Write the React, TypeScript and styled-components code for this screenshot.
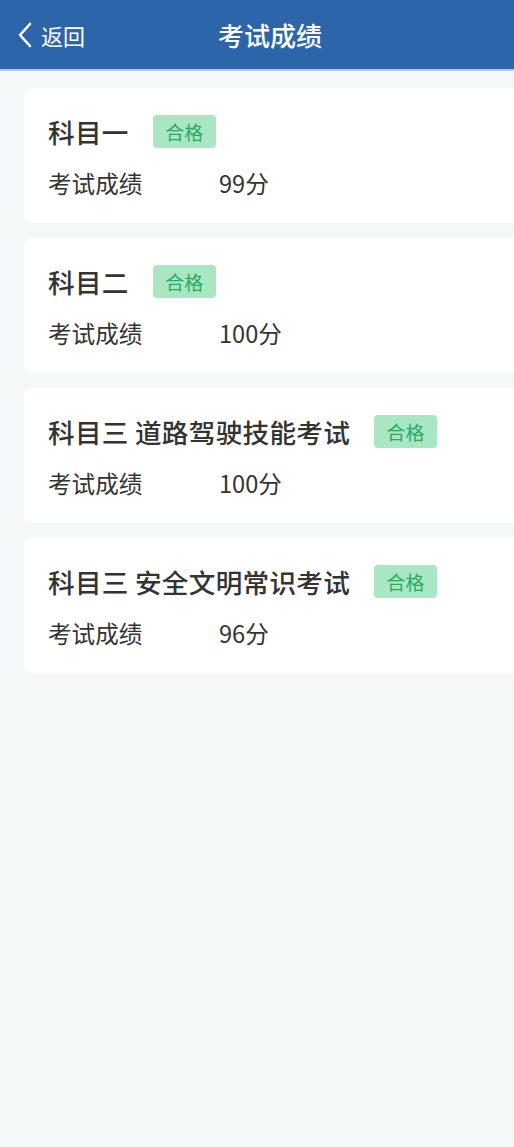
import styled, { createGlobalStyle } from "styled-components"

const GlobalStyle = createGlobalStyle`
  html, body {
    margin: 0;
    padding: 0;
    background: #f4f8f9;
  }
  body {
    font-family: "Noto Sans CJK SC", "Noto Sans", sans-serif;
    color: #333;
  }
`

const Page = styled.div`
  min-height: 1147px;
  background: #f4f8f9;
  overflow: hidden;
`

const Header = styled.div`
  height: 71px;
  background: #2d65aa;
  border-bottom: 2px solid #a9cbe8;
  box-sizing: border-box;
  display: grid;
  grid-template-columns: 110px 1fr 110px;
  align-items: center;
`

const Back = styled.div`
  display: flex;
  align-items: center;
  gap: 8px;
  padding-left: 17px;
  color: #fff;
  font-size: 22px;
`

const Title = styled.div`
  text-align: center;
  color: #fff;
  font-size: 26px;
  font-weight: 500;
  padding-left: 26px;
`

const List = styled.div`
  display: flex;
  flex-direction: column;
  gap: 15px;
  padding: 17px 0 0 24px;
`

const Card = styled.div`
  background: #fff;
  border-radius: 7px 0 0 7px;
  height: 135px;
  box-sizing: border-box;
  padding: 24px 24px 0;
  display: flex;
  flex-direction: column;
  gap: 17px;
`

const TitleRow = styled.div`
  display: flex;
  align-items: center;
  gap: 24px;
  height: 38px;
`

const Subject = styled.div`
  font-size: 26.6px;
  font-weight: 500;
  color: #333;
  letter-spacing: 0.3px;
`

const Badge = styled.span`
  background: #a9e7c2;
  color: #2aa866;
  font-size: 19px;
  border-radius: 4px;
  width: 63px;
  height: 33px;
  display: flex;
  align-items: center;
  justify-content: center;
`

const ScoreRow = styled.div`
  display: flex;
  align-items: center;
  font-size: 23.6px;
  color: #333;
  height: 32px;
`

const Label = styled.span`
  width: 171px;
`

const results = [
  { name: "科目一", score: "99分" },
  { name: "科目二", score: "100分" },
  { name: "科目三 道路驾驶技能考试", score: "100分" },
  { name: "科目三 安全文明常识考试", score: "96分" },
]

export default function App() {
  return (
    <>
      <GlobalStyle />
      <Page>
        <Header>
          <Back>
            <svg width="16" height="26" viewBox="0 0 16 26" fill="none">
              <path d="M13 2 L3 13 L13 24" stroke="#fff" strokeWidth="2.6" strokeLinecap="round" strokeLinejoin="round" />
            </svg>
            <span>返回</span>
          </Back>
          <Title>考试成绩</Title>
          <div />
        </Header>
        <List>
          {results.map((r) => (
            <Card key={r.name}>
              <TitleRow>
                <Subject>{r.name}</Subject>
                <Badge>合格</Badge>
              </TitleRow>
              <ScoreRow>
                <Label>考试成绩</Label>
                <span>{r.score}</span>
              </ScoreRow>
            </Card>
          ))}
        </List>
      </Page>
    </>
  )
}
